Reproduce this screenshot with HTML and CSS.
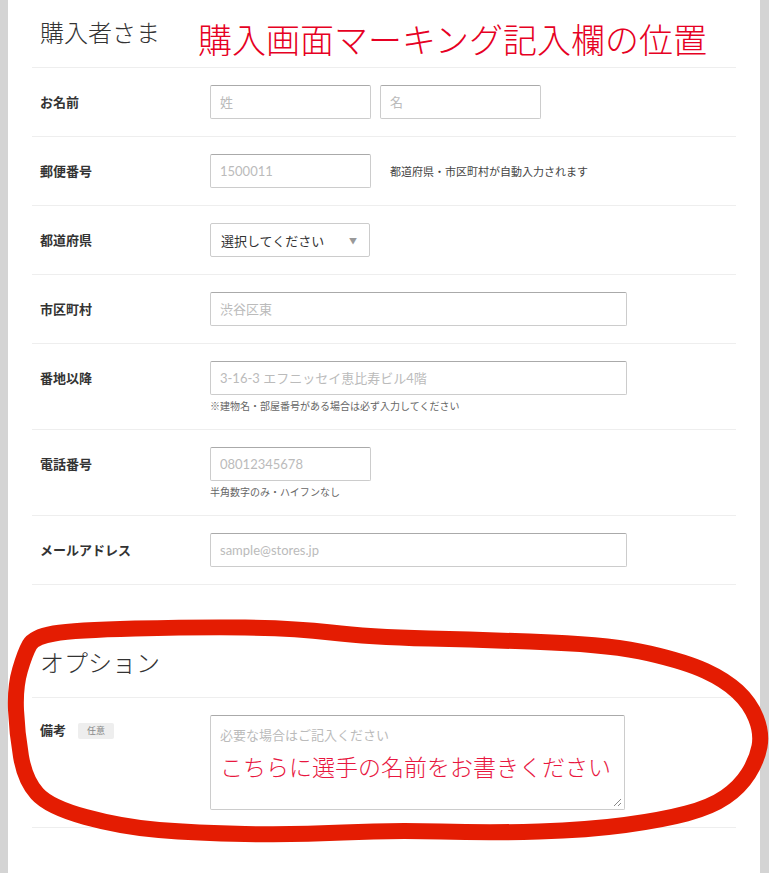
FILE: index.html
```html
<!DOCTYPE html>
<html lang="ja">

<head>
    <meta charset="UTF-8">
    <meta name="viewport" content="width=device-width, initial-scale=1.0">
    <title>購入者さま</title>
    <link rel="stylesheet" href="styles.css">
</head>

<body>
    <div class="page">
        <div class="sheet">
            <div class="section-head">
                <h2>購入者さま</h2>
                <span class="mark-note">購入画面マーキング記入欄の位置</span>
            </div>

            <div class="row">
                <div class="label">お名前</div>
                <div class="field inline">
                    <input class="input short" type="text" placeholder="姓">
                    <input class="input short" type="text" placeholder="名">
                </div>
            </div>

            <div class="row">
                <div class="label">郵便番号</div>
                <div class="field inline">
                    <input class="input short" type="text" placeholder="1500011">
                    <span class="hint">都道府県・市区町村が自動入力されます</span>
                </div>
            </div>

            <div class="row">
                <div class="label">都道府県</div>
                <div class="field">
                    <div class="select">
                        <span>選択してください</span>
                        <span class="arrow">▼</span>
                    </div>
                </div>
            </div>

            <div class="row">
                <div class="label">市区町村</div>
                <div class="field">
                    <input class="input wide" type="text" placeholder="渋谷区東">
                </div>
            </div>

            <div class="row">
                <div class="label">番地以降</div>
                <div class="field">
                    <input class="input wide" type="text" placeholder="3-16-3 エフニッセイ恵比寿ビル4階">
                    <p class="help">※建物名・部屋番号がある場合は必ず入力してください</p>
                </div>
            </div>

            <div class="row">
                <div class="label">電話番号</div>
                <div class="field">
                    <input class="input short" type="text" placeholder="08012345678">
                    <p class="help">半角数字のみ・ハイフンなし</p>
                </div>
            </div>

            <div class="row">
                <div class="label">メールアドレス</div>
                <div class="field">
                    <input class="input wide" type="text" placeholder="sample@stores.jp">
                </div>
            </div>

            <div class="section-head option-head">
                <h2>オプション</h2>
            </div>

            <div class="row">
                <div class="label memo-label">備考<span class="badge">任意</span></div>
                <div class="field">
                    <div class="memo">
                        <p class="memo-placeholder">必要な場合はご記入ください</p>
                        <p class="memo-text">こちらに選手の名前をお書きください</p>
                        <svg class="grip" width="9" height="9" viewBox="0 0 9 9">
                            <path d="M1 8 L8 1 M5 8 L8 5" stroke="#888" stroke-width="1" fill="none" />
                        </svg>
                    </div>
                </div>
            </div>
        </div>

        <!-- 手書きの囲み線 -->
        <svg class="scribble" width="769" height="873" viewBox="0 0 769 873">
            <path d="M54 633.5 Q74 630 135 628.5 Q196 627 245 627.5 Q294 628 331 632.5 Q368 637 429 638.5
                     Q490 640 551.5 642.5 Q613 645 649.5 653.5 Q686 662 705.5 671 Q725 680 737.5 691.5
                     Q750 703 756 718 Q762 733 759.5 746.5 Q757 760 748.5 773.5 Q740 787 725.5 797
                     Q711 807 686.5 813.5 Q662 820 625 825 Q588 830 539 831.5 Q490 833 441 831.5
                     Q392 830 343 832.5 Q294 835 245 834 Q196 833 159 830 Q122 827 85.5 817
                     Q49 807 37 793.5 Q25 780 21 756.5 Q17 733 16 710 Q15 687 20 670
                     Q25 653 29.5 645 Q34 637 54 633.5 Z"
                  fill="none" stroke="#e41c02" stroke-width="16" stroke-linejoin="round" />
        </svg>
    </div>
</body>

</html>
```

FILE: styles.css
```css
* {
    padding: 0;
    margin: 0;
    box-sizing: border-box;
}

body {
    background-color: #d4d4d4;
    font-family: Lato, "Noto Sans CJK JP", sans-serif;
    color: #333;
}

.page {
    position: relative;
    width: 769px;
    height: 873px;
    overflow: hidden;
}

.sheet {
    margin: 0 9px 0 8px;
    height: 873px;
    padding: 0 24px;
    background-color: #fff;
}

.section-head {
    display: flex;
    align-items: flex-start;
    height: 68px;
    padding: 16px 0 0 8px;
    border-bottom: 1px solid #eee;
}

.section-head h2 {
    font-size: 24px;
    font-weight: 300;
    line-height: 32px;
    color: #333;
    font-family: "Noto Sans CJK JP", sans-serif;
}

.mark-note {
    margin-left: 38px;
    margin-top: 3px;
    font-size: 34px;
    font-weight: 300;
    line-height: 40px;
    color: #e60023;
    font-family: "Noto Sans CJK JP", sans-serif;
    white-space: nowrap;
}

.option-head {
    margin-top: 45px;
}

.row {
    display: flex;
    align-items: flex-start;
    padding: 17px 0;
    border-bottom: 1px solid #eee;
}

.label {
    width: 178px;
    flex-shrink: 0;
    padding-left: 8px;
    font-size: 13px;
    font-weight: bold;
    line-height: 34px;
    font-family: "Noto Sans CJK JP", sans-serif;
    color: #333;
}

.memo-label {
    line-height: 30px;
}

.badge {
    display: inline-block;
    margin-left: 12px;
    padding: 0 9px;
    height: 16px;
    line-height: 16px;
    font-size: 9px;
    font-weight: normal;
    color: #888;
    background-color: #eee;
    border-radius: 2px;
    vertical-align: 1px;
}

.field {
    flex: 1;
}

.field.inline {
    display: flex;
    align-items: center;
    gap: 9px;
}

.input {
    display: block;
    height: 34px;
    padding: 0 9px;
    border: 1px solid #ccc;
    border-top-color: #aaa;
    border-radius: 2px;
    outline: none;
    font-family: Lato, "Noto Sans CJK JP", sans-serif;
    font-size: 13px;
    color: #333;
    background-color: #fff;
}

.input::placeholder {
    color: #bbb;
}

.input.short {
    width: 161px;
}

.input.wide {
    width: 417px;
}

.hint {
    margin-left: 10px;
    font-size: 11px;
    color: #444;
    font-family: "Noto Sans CJK JP", sans-serif;
}

.help {
    margin-top: 5px;
    font-size: 10px;
    line-height: 12px;
    color: #666;
    font-family: "Noto Sans CJK JP", sans-serif;
}

.select {
    display: flex;
    justify-content: space-between;
    align-items: center;
    width: 160px;
    height: 34px;
    padding: 0 10px;
    border: 1px solid #ccc;
    border-radius: 2px;
    font-size: 13px;
    color: #333;
    font-family: "Noto Sans CJK JP", sans-serif;
}

.select .arrow {
    font-size: 8px;
    color: #999;
    margin-right: 2px;
}

.memo {
    position: relative;
    width: 415px;
    height: 95px;
    padding: 9px 9px 0;
    border: 1px solid #ccc;
    border-top-color: #aaa;
    border-radius: 2px;
    font-family: "Noto Sans CJK JP", sans-serif;
}

.memo-placeholder {
    font-size: 13px;
    line-height: 20px;
    color: #bbb;
}

.memo-text {
    margin-top: 6px;
    font-size: 23px;
    font-weight: 300;
    line-height: 30px;
    color: #e8173f;
    white-space: nowrap;
}

.grip {
    position: absolute;
    right: 2px;
    bottom: 2px;
}

.scribble {
    position: absolute;
    left: 0;
    top: 0;
    pointer-events: none;
}
```
